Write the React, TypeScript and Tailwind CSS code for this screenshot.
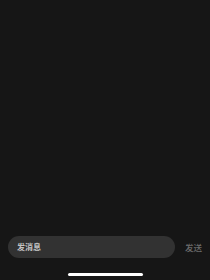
export default function App() {
  return (
    <div
      className="w-full h-[280px] bg-[#161616] flex flex-col"
      style={{ fontFamily: '"Noto Sans CJK SC", "Noto Sans", sans-serif' }}
    >
      {/* Messages area */}
      <div className="flex-1" />

      {/* Composer */}
      <div className="flex items-center pl-[8px] pr-[8px]">
        <div className="flex-1 h-[22px] rounded-full bg-[#323232] flex items-center pl-[9px] text-[8px] font-semibold text-[#c4c4c4]">
          发消息
        </div>
        <button className="ml-[10px] text-[8.5px] font-medium text-[#6c6c6c] leading-none">发送</button>
      </div>

      {/* Home indicator */}
      <div className="flex justify-center mt-[15px] mb-[4px]">
        <div className="w-[75px] h-[3px] rounded-full bg-white" />
      </div>
    </div>
  );
}
